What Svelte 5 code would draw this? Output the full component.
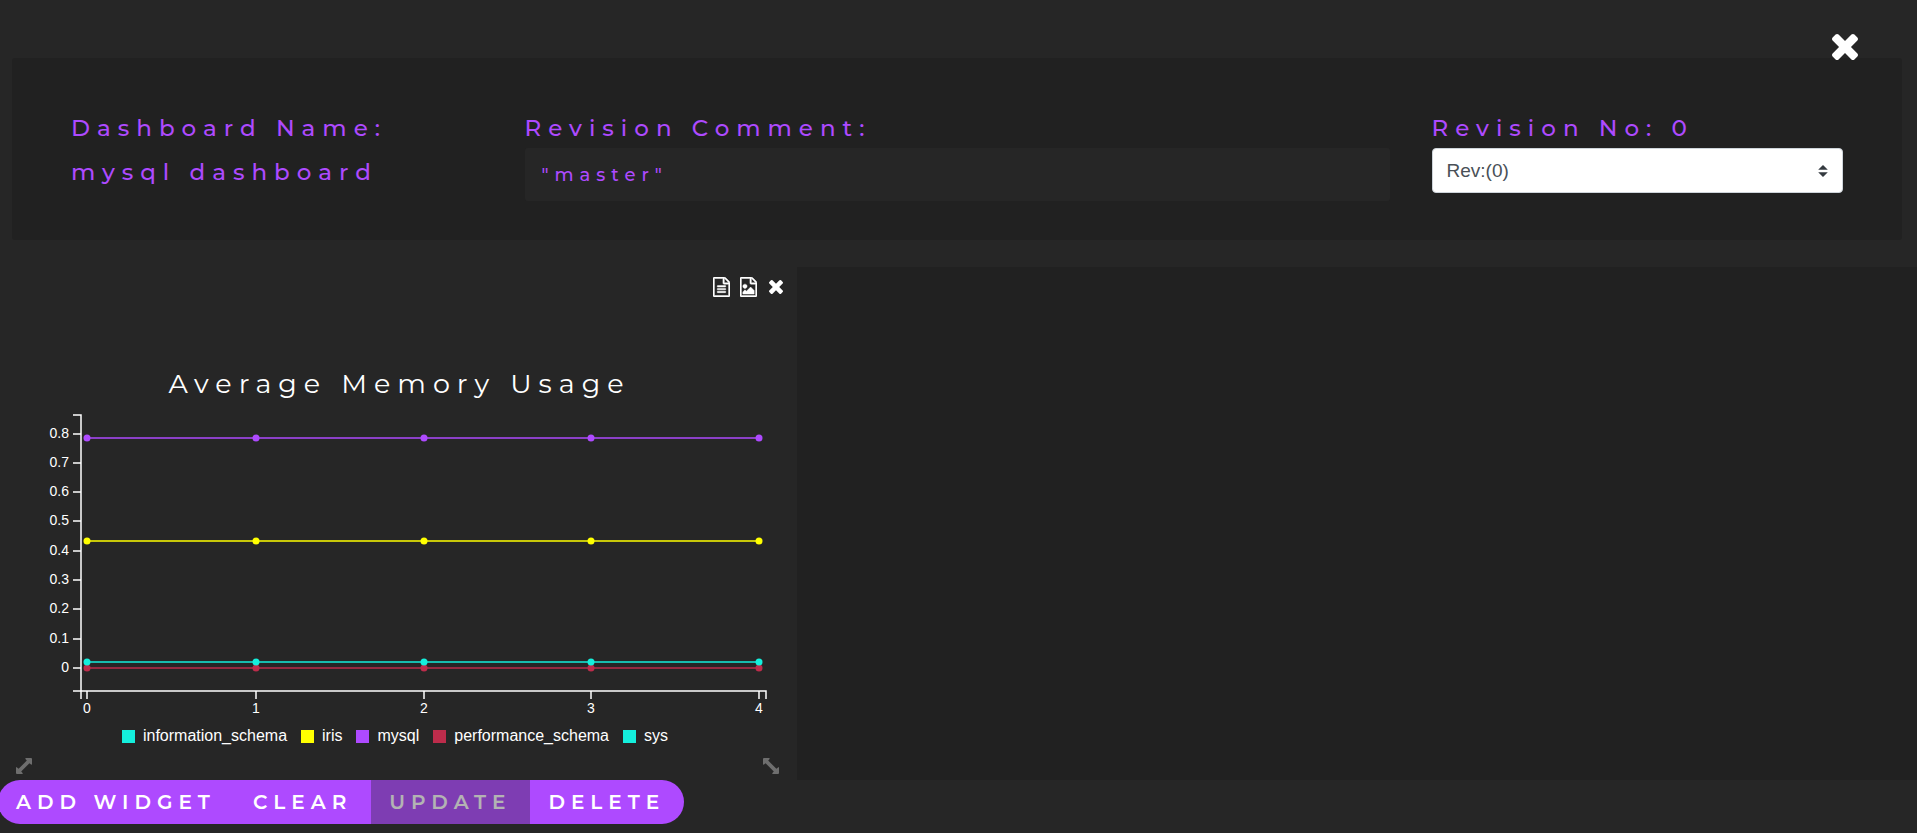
<script>
  const FILE =
    'M1596 380q28 28 48 76t20 88v1152q0 40-28 68t-68 28h-1344q-40 0-68-28t-28-68v-1600q0-40 28-68t68-28h896q40 0 88 20t76 48zm-444-244v376h376q-10-29-22-41l-313-313q-12-12-41-22zm384 1528v-1024h-416q-40 0-68-28t-28-68v-416h-768v1536h1280z';
  const FILE_TEXT =
    FILE +
    'm-1024-864q0-14 9-23t23-9h704q14 0 23 9t9 23v64q0 14-9 23t-23 9h-704q-14 0-23-9t-9-23v-64zm736 224q14 0 23 9t9 23v64q0 14-9 23t-23 9h-704q-14 0-23-9t-9-23v-64q0-14 9-23t23-9h704zm0 256q14 0 23 9t9 23v64q0 14-9 23t-23 9h-704q-14 0-23-9t-9-23v-64q0-14 9-23t23-9h704z';
  const FILE_IMAGE =
    FILE +
    'm-128-448v320h-1024v-192l192-192 128 128 384-384zm-832-192q-80 0-136-56t-56-136 56-136 136-56 136 56 56 136-56 136-136 56z';
  const TIMES =
    'M1490 1322q0 40-28 68l-136 136q-28 28-68 28t-68-28l-294-294-294 294q-28 28-68 28t-68-28l-136-136q-28-28-28-68t28-68l294-294-294-294q-28-28-28-68t28-68l136-136q28-28 68-28t68 28l294 294 294-294q28-28 68-28t68 28l136 136q28 28 28 68t-28 68l-294 294 294 294q28 28 28 68z';
  const RESIZE =
    'M1 9Q0 9 0 10V15Q0 16 1 16H6Q7 16 6.600 15L5.200 13.400 13.400 5.200 15 6.600Q16 7 16 6V1Q16 0 15 0H10Q9 0 9.400 1L10.800 2.600 2.600 10.800 1 9.400Z';

  const yTicks = [
    ['0.8', 434], ['0.7', 463], ['0.6', 492], ['0.5', 521], ['0.4', 551],
    ['0.3', 580], ['0.2', 609], ['0.1', 639], ['0', 668]
  ].map(([label, y]) => ({ label, y: y - 357 }));
  const xTicks = [87, 256, 424, 591, 759];

  const lines = [
    { name: 'mysql', color: '#ae4aff', y: 81 },
    { name: 'iris', color: '#ffff00', y: 184 },
    { name: 'performance_schema', color: '#bd2c4b', y: 311 },
    { name: 'sys', color: '#14efdc', y: 305 }
  ];
  const legend = [
    ['information_schema', '#14efdc'],
    ['iris', '#ffff00'],
    ['mysql', '#ae4aff'],
    ['performance_schema', '#bd2c4b'],
    ['sys', '#14efdc']
  ];
</script>

<main>
  <div class="topbar">
    <button class="icon close" aria-label="Close dashboard">
      <svg viewBox="302 366 1188 1188" width="26" height="26"><path d={TIMES} /></svg>
    </button>
  </div>

  <section class="details">
    <div class="cell">
      <h2>Dashboard Name:</h2>
      <p>mysql dashboard</p>
    </div>
    <div class="cell">
      <label for="comment">Revision Comment:</label>
      <input id="comment" type="text" value={'"master"'} />
    </div>
    <div class="cell">
      <label for="revision">Revision No: 0</label>
      <div class="picker">
        <select id="revision"><option>Rev:(0)</option></select>
        <svg viewBox="0 0 4 5" width="10" height="12"><path d="M2 0 0 2h4zm0 5L0 3h4z" /></svg>
      </div>
    </div>
  </section>

  <section class="board">
    <article class="widget">
      <header>
        <button class="icon file" aria-label="Export data">
          <svg viewBox="128 0 1536 1792" width="17" height="20"><path d={FILE_TEXT} /></svg>
        </button>
        <button class="icon file" aria-label="Export image">
          <svg viewBox="128 0 1536 1792" width="17" height="20"><path d={FILE_IMAGE} /></svg>
        </button>
        <button class="icon remove" aria-label="Remove widget">
          <svg viewBox="302 366 1188 1188" width="14" height="14"><path d={TIMES} /></svg>
        </button>
      </header>
      <h1>Average Memory Usage</h1>
      <svg class="chart" viewBox="0 50 797 314" role="img" aria-label="Average Memory Usage">
        <path class="axis" d="M73 58H81V342M73 334H766V342" />
        {#each yTicks as t}
          <path class="axis" d="M73 {t.y}H81" />
          <text x="69" y={t.y + 4} text-anchor="end">{t.label}</text>
        {/each}
        {#each xTicks as x, i}
          <path class="axis" d="M{x} 334V342" />
          <text {x} y="356" text-anchor="middle">{i}</text>
        {/each}
        {#each lines as l}
          <path d="M87 {l.y}H759" stroke={l.color} stroke-width="1.500" />
          {#each xTicks as x}<circle cx={x} cy={l.y} r="3.500" fill={l.color} />{/each}
        {/each}
      </svg>
      <ul class="legend">
        {#each legend as [name, color]}
          <li><i style:background={color}></i>{name}</li>
        {/each}
      </ul>
      <footer>
        <svg viewBox="0 0 16 16" width="16" height="16"><path d={RESIZE} /></svg>
        <svg class="flip" viewBox="0 0 16 16" width="16" height="16"><path d={RESIZE} /></svg>
      </footer>
    </article>
  </section>

  <nav class="actions">
    <button>ADD WIDGET</button>
    <button>CLEAR</button>
    <button disabled>UPDATE</button>
    <button>DELETE</button>
  </nav>
</main>

<style>
  :global(body) {
    margin: 0;
    background: #262626;
  }
  main {
    font-family: Montserrat, Inter, sans-serif;
    color: #fff;
    overflow-x: hidden;
  }
  h1, h2, p, ul { margin: 0; padding: 0; font-weight: 400; }
  svg { display: block; }
  button { font: inherit; cursor: pointer; }
  .icon {
    border: 0;
    padding: 0;
    background: none;
    color: #fff;
  }
  .icon svg { fill: currentColor; }
  .file svg {
    stroke: currentColor;
    stroke-width: 40;
  }
  .topbar {
    display: flex;
    justify-content: flex-end;
    height: 58px;
    padding: 34px 59px 0 0;
    box-sizing: border-box;
  }
  .close { height: 26px; z-index: 1; }
  .details {
    display: grid;
    grid-template-columns: 1fr 2fr 1fr;
    margin: 0 15px 0 12px;
    padding: 52px 38px 39px;
    background: #212121;
    border-radius: 3px;
    color: #ae4aff;
  }
  .cell { padding: 0 21px; }
  h2, label, p {
    display: block;
    font-size: 23px;
    line-height: 36px;
    font-weight: 500;
    letter-spacing: 7px;
    white-space: nowrap;
  }
  p { margin-top: 8px; }
  label { margin-bottom: 2px; }
  input {
    display: block;
    width: 100%;
    height: 53px;
    box-sizing: border-box;
    padding: 0 17px;
    border: 0;
    border-radius: 3px;
    background: #262626;
    color: inherit;
    font: 500 18px Montserrat, Inter, sans-serif;
    letter-spacing: 6px;
  }
  .picker { position: relative; }
  select {
    appearance: none;
    display: block;
    width: 100%;
    height: 45px;
    padding: 0 14px;
    border: 1px solid #ced4da;
    border-radius: 4px;
    background: #fff;
    color: #495057;
    font: 19px "Liberation Sans", Arial, sans-serif;
  }
  .picker svg {
    position: absolute;
    right: 15px;
    top: 17px;
    fill: #343a40;
    pointer-events: none;
  }
  .board {
    display: grid;
    grid-template-columns: 797fr 1120fr;
    margin-top: 27px;
    background: #212121;
  }
  .widget { background: #262626; }
  header {
    display: flex;
    align-items: center;
    justify-content: flex-end;
    gap: 10px;
    padding: 10px 14px 0 0;
  }
  .remove { margin-left: 2px; }
  h1 {
    margin-top: 69px;
    padding-left: 2px;
    font-size: 27px;
    line-height: 36px;
    font-weight: 400;
    letter-spacing: 7px;
    text-align: center;
  }
  .chart {
    width: 100%;
    margin-top: 5px;
    fill: none;
    font: 14px "Liberation Sans", Arial, sans-serif;
  }
  .chart text { fill: #fff; }
  .axis { stroke: #fff; stroke-width: 1.5px; }
  .legend {
    display: flex;
    justify-content: center;
    gap: 14px;
    margin-top: 5px;
    padding-right: 7px;
    list-style: none;
    font: 16px/20px "Liberation Sans", Arial, sans-serif;
  }
  li {
    display: flex;
    align-items: center;
    gap: 8px;
  }
  i { width: 13px; height: 13px; }
  footer {
    display: flex;
    justify-content: space-between;
    padding: 12px 18px 6px 16px;
    fill: #6e6e6e;
  }
  .flip { transform: scaleX(-1); }
  .actions {
    display: flex;
    width: max-content;
    margin: 0 0 9px -2px;
    border-radius: 22px;
    overflow: hidden;
  }
  .actions button {
    height: 44px;
    padding: 0 19px 0 18px;
    border: 0;
    background: #ae4aff;
    color: #fff;
    font-size: 20px;
    font-weight: 600;
    letter-spacing: 6px;
  }
  .actions button:disabled { opacity: 0.65; }
</style>
